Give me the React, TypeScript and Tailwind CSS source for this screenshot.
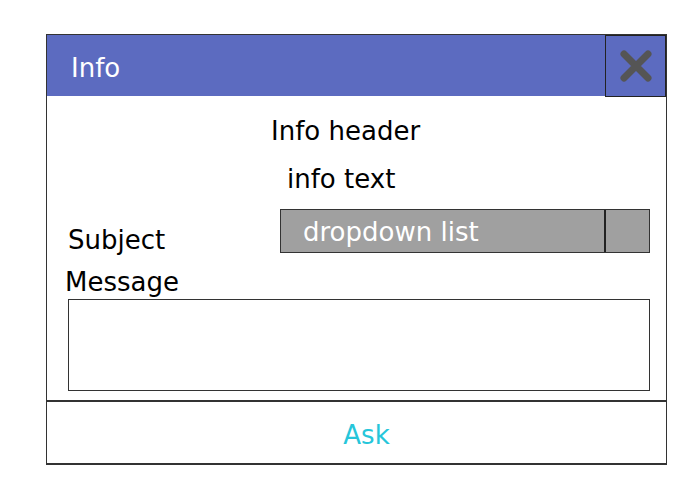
export default function App() {
  return (
    <div
      className="h-[500px] w-[700px] bg-white pl-[46px] pt-[34px]"
      style={{ fontFamily: '"DejaVu Sans", sans-serif' }}
    >
      <div className="flex w-[621px] flex-col border border-b-2 border-[#333]">
        <div className="flex h-[61px] items-stretch bg-[#5c6bc0]">
          <div className="flex flex-1 items-center pl-[24px] pt-[4px] text-[26px] leading-[30px] text-white">
            Info
          </div>
          <button className="-mb-[1px] flex w-[61px] items-center justify-center border border-[#222]">
            <svg width="40" height="40" viewBox="0 0 40 40">
              <path d="M8 8 L32 32 M32 8 L8 32" stroke="#555" strokeWidth="7" strokeLinecap="round" />
            </svg>
          </button>
        </div>
        <div className="flex flex-col pl-[21px] pr-[16px] pb-[9px] text-[26px] leading-[30px] text-black">
          <div className="mt-[20px] pl-[203px]">Info header</div>
          <div className="mt-[18px] pl-[219px]">info text</div>
          <div className="mt-[15px] flex items-start justify-between">
            <span className="mt-[16px]">Subject</span>
            <div className="flex h-[44px] w-[370px] border border-[#333] bg-[#a0a0a0]">
              <span className="flex flex-1 items-center pl-[22px] pt-[2px] text-white">dropdown list</span>
              <div className="w-[45px] border-l-2 border-[#222]" />
            </div>
          </div>
          <span className="-ml-[3px] mt-[12px]">Message</span>
          <div className="mt-[2px] h-[92px] w-[582px] border border-[#333]" />
        </div>
        <button className="flex h-[63px] items-center justify-center border-t-2 border-[#333] pl-[20px] pt-[4px] text-[26px] leading-[30px] text-[#26c6da]">
          Ask
        </button>
      </div>
    </div>
  );
}
